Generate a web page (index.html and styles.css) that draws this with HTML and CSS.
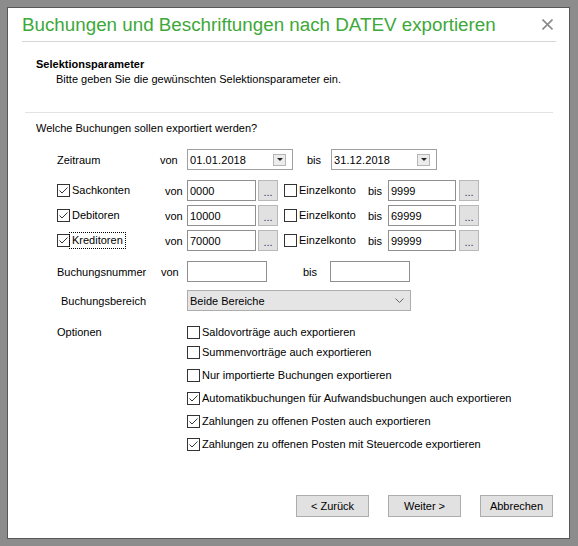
FILE: index.html
```html
<!DOCTYPE html>
<html lang="de">
<head>
<meta charset="utf-8">
<title>Buchungen und Beschriftungen nach DATEV exportieren</title>
<link rel="stylesheet" href="styles.css">
</head>
<body>
<div class="window">
  <div class="titlebar">
    <span class="title">Buchungen und Beschriftungen nach DATEV exportieren</span>
    <svg class="close" width="11" height="11" viewBox="0 0 11 11"><path d="M0.5 0.5 L10.5 10.5 M10.5 0.5 L0.5 10.5" stroke="#8a8a8a" stroke-width="1.6" fill="none"/></svg>
  </div>
  <div class="sep-title"></div>
  <div class="header">
    <div class="h-title">Selektionsparameter</div>
    <div class="h-desc">Bitte geben Sie die gewünschten Selektionsparameter ein.</div>
  </div>
  <div class="sep-header"></div>

  <div class="form">
    <div class="question">Welche Buchungen sollen exportiert werden?</div>

    <div class="row row-zeit">
      <span class="lbl-zeit">Zeitraum</span>
      <span class="von-zeit">von</span>
      <span class="date"><span class="date-text">01.01.2018</span><span class="dd"><span class="tri"></span></span></span>
      <span class="bis-zeit">bis</span>
      <span class="date"><span class="date-text">31.12.2018</span><span class="dd"><span class="tri"></span></span></span>
    </div>

    <div class="accounts">
      <div class="row">
        <span class="acc-cell"><span class="cb checked"><svg width="11" height="11" viewBox="0 0 11 11"><polyline points="1.5,5.5 4,8 9.5,2.5" fill="none" stroke="#333" stroke-width="1"/></svg></span><span class="cb-lbl">Sachkonten</span></span>
        <span class="von-acc">von</span>
        <span class="input in-from">0000</span>
        <span class="ell">...</span>
        <span class="ez-cell"><span class="cb"></span><span class="cb-lbl">Einzelkonto</span></span>
        <span class="bis-acc">bis</span>
        <span class="input in-to">9999</span>
        <span class="ell ell-to">...</span>
      </div>
      <div class="row">
        <span class="acc-cell"><span class="cb checked"><svg width="11" height="11" viewBox="0 0 11 11"><polyline points="1.5,5.5 4,8 9.5,2.5" fill="none" stroke="#333" stroke-width="1"/></svg></span><span class="cb-lbl">Debitoren</span></span>
        <span class="von-acc">von</span>
        <span class="input in-from">10000</span>
        <span class="ell">...</span>
        <span class="ez-cell"><span class="cb"></span><span class="cb-lbl">Einzelkonto</span></span>
        <span class="bis-acc">bis</span>
        <span class="input in-to">69999</span>
        <span class="ell ell-to">...</span>
      </div>
      <div class="row">
        <span class="acc-cell"><span class="cb checked"><svg width="11" height="11" viewBox="0 0 11 11"><polyline points="1.5,5.5 4,8 9.5,2.5" fill="none" stroke="#333" stroke-width="1"/></svg></span><span class="cb-lbl focus">Kreditoren</span></span>
        <span class="von-acc">von</span>
        <span class="input in-from">70000</span>
        <span class="ell">...</span>
        <span class="ez-cell"><span class="cb"></span><span class="cb-lbl">Einzelkonto</span></span>
        <span class="bis-acc">bis</span>
        <span class="input in-to">99999</span>
        <span class="ell ell-to">...</span>
      </div>
    </div>

    <div class="row row-num">
      <span class="lbl-num">Buchungsnummer</span>
      <span class="von-num">von</span>
      <span class="input in-num"></span>
      <span class="bis-num">bis</span>
      <span class="input in-num"></span>
    </div>

    <div class="row row-bereich">
      <span class="lbl-bereich">Buchungsbereich</span>
      <span class="select"><span>Beide Bereiche</span><svg width="9" height="5" viewBox="0 0 9 5"><polyline points="0.5,0.5 4.5,4.5 8.5,0.5" fill="none" stroke="#666" stroke-width="1"/></svg></span>
    </div>

    <div class="options">
      <span class="lbl-opt">Optionen</span>
      <div class="opt-list">
        <div class="opt first"><span class="cb"></span><span class="cb-lbl">Saldovorträge auch exportieren</span></div>
        <div class="opt"><span class="cb"></span><span class="cb-lbl">Summenvorträge auch exportieren</span></div>
        <div class="opt"><span class="cb"></span><span class="cb-lbl">Nur importierte Buchungen exportieren</span></div>
        <div class="opt"><span class="cb checked"><svg width="11" height="11" viewBox="0 0 11 11"><polyline points="1.5,5.5 4,8 9.5,2.5" fill="none" stroke="#333" stroke-width="1"/></svg></span><span class="cb-lbl">Automatikbuchungen für Aufwandsbuchungen auch exportieren</span></div>
        <div class="opt"><span class="cb checked"><svg width="11" height="11" viewBox="0 0 11 11"><polyline points="1.5,5.5 4,8 9.5,2.5" fill="none" stroke="#333" stroke-width="1"/></svg></span><span class="cb-lbl">Zahlungen zu offenen Posten auch exportieren</span></div>
        <div class="opt"><span class="cb checked"><svg width="11" height="11" viewBox="0 0 11 11"><polyline points="1.5,5.5 4,8 9.5,2.5" fill="none" stroke="#333" stroke-width="1"/></svg></span><span class="cb-lbl">Zahlungen zu offenen Posten mit Steuercode exportieren</span></div>
      </div>
    </div>
  </div>

  <div class="footer">
    <span class="btn">&lt; Zurück</span>
    <span class="btn">Weiter &gt;</span>
    <span class="btn">Abbrechen</span>
  </div>
</div>
</body>
</html>
```

FILE: styles.css
```css
html, body {
  margin: 0;
  padding: 0;
}
body {
  width: 578px;
  height: 546px;
  background: #8c8c8c;
  font-family: "Liberation Sans", Arial, sans-serif;
  font-size: 11px;
  color: #000;
  overflow: hidden;
}
.window {
  box-sizing: border-box;
  margin: 7px 0 0 7px;
  width: 563px;
  height: 532px;
  border: 1px solid #575757;
  background: #fff;
  display: flex;
  flex-direction: column;
}
.titlebar {
  height: 33px;
  display: flex;
  align-items: center;
  justify-content: space-between;
  padding: 0 16px 0 14px;
}
.title {
  font-size: 18.8px;
  line-height: 22px;
  color: #3ea83a;
}
.close {
  display: block;
  margin-top: -1px;
}
.sep-title {
  height: 1px;
  width: 534px;
  margin-left: 14px;
  background: #d6d6d6;
}
.header {
  padding: 15px 0 0 28px;
  line-height: 15px;
}
.h-title {
  font-weight: bold;
}
.h-desc {
  padding-left: 20px;
}
.sep-header {
  height: 1px;
  width: 528px;
  margin: 25px 0 0 17px;
  background: #e3e3e3;
}
.form {
  padding-left: 49px;
}
.question {
  margin: 8px 0 0 -21px;
  line-height: 15px;
}
.row {
  display: flex;
  align-items: center;
  height: 21px;
}
.row-zeit {
  margin-top: 13px;
}
.lbl-zeit { width: 103px; }
.von-zeit { width: 27px; }
.bis-zeit { width: 24px; margin-left: 14px; }
.date {
  box-sizing: border-box;
  width: 106px;
  height: 21px;
  border: 1px solid #a0a0a0;
  display: flex;
  align-items: center;
  justify-content: space-between;
  padding: 0 6px 0 2px;
}
.date-text { letter-spacing: 0.1px; }
.dd {
  box-sizing: border-box;
  width: 13px;
  height: 12px;
  border: 1px solid #b5b5b5;
  background: #ececec;
  display: flex;
  align-items: center;
  justify-content: center;
}
.tri {
  width: 0;
  height: 0;
  border-left: 3px solid transparent;
  border-right: 3px solid transparent;
  border-top: 3px solid #222;
}
.accounts {
  margin-top: 10px;
  display: flex;
  flex-direction: column;
  gap: 4px;
}
.acc-cell {
  width: 108px;
  display: flex;
  align-items: center;
}
.von-acc { width: 22px; }
.ez-cell {
  width: 84px;
  margin-left: 6px;
  display: flex;
  align-items: center;
}
.bis-acc { width: 20px; }
.input {
  box-sizing: border-box;
  height: 21px;
  border: 1px solid #8f8f8f;
  background: #fff;
  padding-left: 2px;
  display: flex;
  align-items: center;
}
.in-from { width: 69px; }
.in-to { width: 68px; }
.ell {
  box-sizing: border-box;
  width: 20px;
  height: 21px;
  margin-left: 2px;
  border: 1px solid #b8b8b8;
  background: #e1e1e1;
  color: #2b3a66;
  display: flex;
  align-items: center;
  justify-content: center;
  padding-top: 2px;
}
.ell-to { margin-left: 3px; }
.cb {
  box-sizing: border-box;
  width: 13px;
  height: 13px;
  border: 1px solid #333;
  background: #fff;
  flex: none;
  display: flex;
  align-items: center;
  justify-content: center;
}
.cb svg { display: block; }
.cb-lbl {
  margin-left: 2px;
  line-height: 13px;
}
.focus {
  outline: 1px dotted #000;
  outline-offset: 1px;
  padding: 0 1px;
  margin-left: 1px;
}
.row-num { margin-top: 10px; }
.lbl-num { width: 104px; }
.von-num { width: 26px; }
.bis-num { width: 27px; margin-left: 36px; }
.in-num { width: 80px; }
.row-bereich { margin-top: 8px; }
.lbl-bereich {
  box-sizing: border-box;
  width: 130px;
  padding-left: 4px;
}
.select {
  box-sizing: border-box;
  width: 224px;
  height: 21px;
  border: 1px solid #adadad;
  background: #e5e5e5;
  display: flex;
  align-items: center;
  justify-content: space-between;
  padding: 0 6px 0 2px;
}
.select svg { display: block; }
.options {
  margin-top: 15px;
  display: flex;
}
.lbl-opt {
  width: 130px;
  line-height: 13px;
}
.opt-list {
  display: flex;
  flex-direction: column;
  gap: 10px;
}
.opt {
  display: flex;
  align-items: center;
  height: 13px;
}
.opt .cb-lbl { margin-left: 2px; }
.opt.first { margin-bottom: -3px; }
.footer {
  margin-top: auto;
  display: flex;
  justify-content: flex-end;
  gap: 19px;
  padding: 0 16px 21px 0;
}
.btn {
  box-sizing: border-box;
  width: 73px;
  height: 22px;
  border: 1px solid #adadad;
  background: #e1e1e1;
  display: flex;
  align-items: center;
  justify-content: center;
}
```
